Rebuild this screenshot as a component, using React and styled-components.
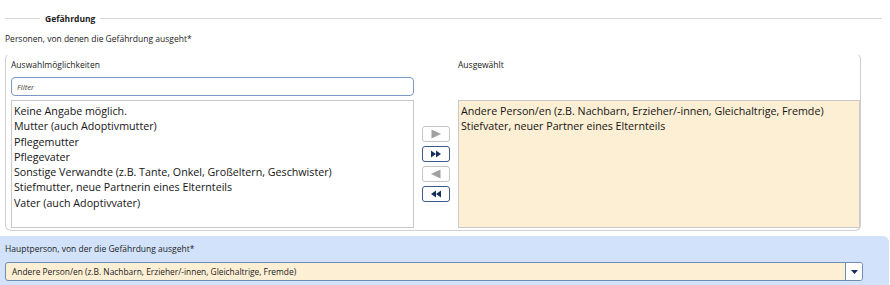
import React from "react";
import styled, { createGlobalStyle } from "styled-components";

const Global = createGlobalStyle`
  html, body { margin: 0; padding: 0; background: #fff; }
  body { font-family: "Open Sans", "Noto Sans", sans-serif; color: #222; }
`;

const Page = styled.div`
  width: 890px;
  height: 285px;
  overflow: hidden;
  display: flex;
  flex-direction: column;
`;

const Legend = styled.div`
  display: flex;
  align-items: center;
  gap: 5px;
  margin: 12px 8px 0 5px;
  height: 12px;
  &::before, &::after {
    content: "";
    height: 1px;
    background: #d6d6d6;
  }
  &::before { width: 35px; }
  &::after { flex: 1; }
`;

const LegendText = styled.span`
  font-size: 8.5px;
  font-weight: 700;
  color: #222;
`;

const SmallLabel = styled.div`
  font-size: 8.5px;
  line-height: 12px;
  height: 12px;
  color: #222;
  padding-left: 5px;
  margin-top: ${p => p.$top || 0}px;
`;

const Panel = styled.div`
  margin: 8px 0 0 5px;
  width: 856px;
  height: 178px;
  box-sizing: border-box;
  border: 1px solid #d0d0d0;
  border-top-color: transparent;
  border-radius: 6px;
  display: grid;
  grid-template-columns: 403px 44px 402px;
  padding: 0 0 0 5px;
`;

const Column = styled.div`
  display: flex;
  flex-direction: column;
`;

const ColHead = styled.div`
  font-size: 8.5px;
  line-height: 12px;
  color: #222;
  margin-top: 5px;
  height: 12px;
`;

const FilterInput = styled.div`
  margin-top: 6px;
  height: 19px;
  box-sizing: border-box;
  border: 1px solid #7b98c2;
  border-radius: 4px;
  font-size: 7.8px;
  font-style: italic;
  color: #444;
  padding: 0 5px;
  display: flex;
  align-items: center;
`;

const ListBox = styled.div`
  margin-top: ${p => p.$top}px;
  height: 128px;
  box-sizing: border-box;
  border: 1px solid #c9c9c9;
  background: ${p => (p.$selected ? "#fdefd4" : "#fff")};
  padding: 3px 2px;
`;

const Item = styled.div`
  font-size: 10.7px;
  line-height: 15.3px;
  color: #151515;
  white-space: nowrap;
`;

const Buttons = styled.div`
  display: flex;
  flex-direction: column;
  align-items: center;
  gap: 4px;
  padding-top: 72px;
`;

const MoveButton = styled.div`
  width: 28px;
  height: 16px;
  box-sizing: border-box;
  border: 1px solid ${p => (p.$active ? "#3b5a86" : "#c4c4c4")};
  border-radius: 3px;
  background: #fff;
  display: flex;
  align-items: center;
  justify-content: center;
`;

const Bottom = styled.div`
  margin-top: 5px;
  width: 889px;
  flex: 1;
  background: #d2e2fb;
  border-radius: 0 6px 0 0;
  display: flex;
  flex-direction: column;
`;

const Select = styled.div`
  margin: 7px 0 0 5px;
  width: 858px;
  height: 19px;
  box-sizing: border-box;
  border: 1px solid #6f8cb4;
  border-radius: 3px;
  background: #fdefd4;
  display: flex;
  align-items: center;
  overflow: hidden;
`;

const SelectText = styled.span`
  flex: 1;
  font-size: 8.4px;
  color: #222;
  padding-left: 6px;
`;

const DropButton = styled.div`
  width: 16px;
  height: 100%;
  border-left: 1px solid #6f8cb4;
  background: #fff;
  display: flex;
  align-items: center;
  justify-content: center;
`;

const Tri = ({ dir, color, double }) => {
  const one = (x) =>
    dir === "r" ? `M${x} 0.5 L${x + 5} 4 L${x} 7.5 Z` : `M${x + 5} 0.5 L${x} 4 L${x + 5} 7.5 Z`;
  if (double) {
    return (
      <svg width="10" height="8" viewBox="0 0 10 8">
        <path d={one(0)} fill={color} />
        <path d={one(5)} fill={color} />
      </svg>
    );
  }
  return (
    <svg width="12" height="10" viewBox="0 0 12 10">
      <path d={dir === "r" ? "M1.5 0.5 L11 5 L1.5 9.5 Z" : "M10.5 0.5 L1 5 L10.5 9.5 Z"} fill={color} />
    </svg>
  );
};

const options = [
  "Keine Angabe möglich.",
  "Mutter (auch Adoptivmutter)",
  "Pflegemutter",
  "Pflegevater",
  "Sonstige Verwandte (z.B. Tante, Onkel, Großeltern, Geschwister)",
  "Stiefmutter, neue Partnerin eines Elternteils",
  "Vater (auch Adoptivvater)",
];

const chosen = [
  "Andere Person/en (z.B. Nachbarn, Erzieher/-innen, Gleichaltrige, Fremde)",
  "Stiefvater, neuer Partner eines Elternteils",
];

export default function App() {
  return (
    <Page>
      <Global />
      <Legend>
        <LegendText>Gefährdung</LegendText>
      </Legend>
      <SmallLabel $top={9}>Personen, von denen die Gefährdung ausgeht*</SmallLabel>
      <Panel>
        <Column>
          <ColHead>Auswahlmöglichkeiten</ColHead>
          <FilterInput>Filter</FilterInput>
          <ListBox $top={4}>
            {options.map((o) => (
              <Item key={o}>{o}</Item>
            ))}
          </ListBox>
        </Column>
        <Buttons>
          <MoveButton><Tri dir="r" color="#a0a0a0" /></MoveButton>
          <MoveButton $active><Tri dir="r" color="#14305a" double /></MoveButton>
          <MoveButton><Tri dir="l" color="#a0a0a0" /></MoveButton>
          <MoveButton $active><Tri dir="l" color="#14305a" double /></MoveButton>
        </Buttons>
        <Column>
          <ColHead>Ausgewählt</ColHead>
          <ListBox $top={29} $selected>
            {chosen.map((o) => (
              <Item key={o}>{o}</Item>
            ))}
          </ListBox>
        </Column>
      </Panel>
      <Bottom>
        <SmallLabel $top={7}>Hauptperson, von der die Gefährdung ausgeht*</SmallLabel>
        <Select>
          <SelectText>Andere Person/en (z.B. Nachbarn, Erzieher/-innen, Gleichaltrige, Fremde)</SelectText>
          <DropButton>
            <svg width="7" height="4" viewBox="0 0 7 4"><path d="M0 0 L7 0 L3.5 4 Z" fill="#14305a" /></svg>
          </DropButton>
        </Select>
      </Bottom>
    </Page>
  );
}
